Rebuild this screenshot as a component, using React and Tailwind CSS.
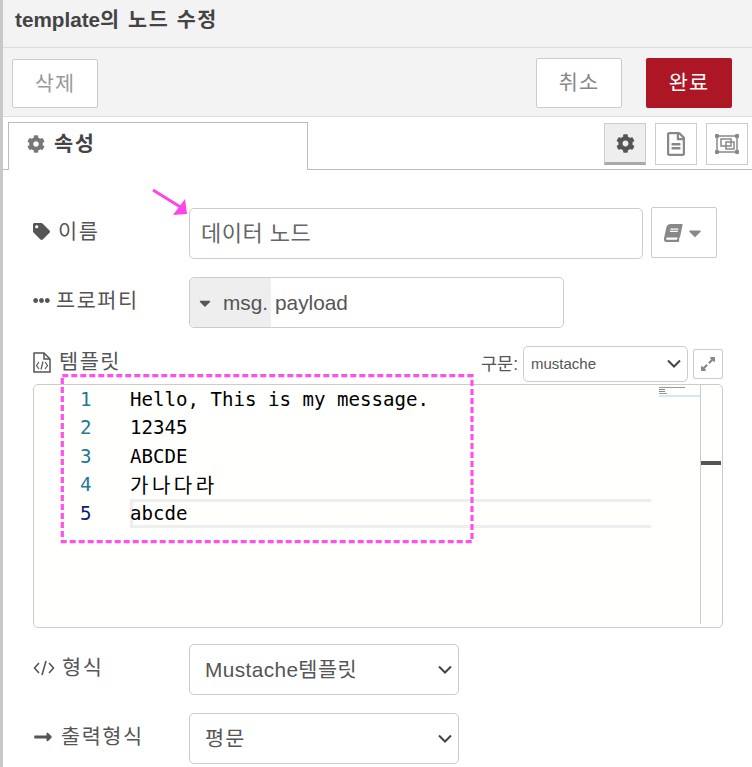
import { FaCog, FaTag, FaEllipsisH, FaBook, FaCaretDown, FaExpandAlt, FaLongArrowAltRight, FaRegFileAlt } from "react-icons/fa";

const sans = "font-['Liberation_Sans','Noto_Sans_CJK_KR',sans-serif]";

function NodeBoxIcon() {
    return (
        <svg width="24" height="20" viewBox="0 0 24 20" fill="none" stroke="#888" strokeWidth="1.5">
            <rect x="2" y="2" width="20" height="16" />
            <rect x="6" y="5" width="10" height="7" />
            <rect x="11" y="8" width="8" height="7" />
            <g fill="#888" stroke="none">
                <rect x="0" y="0" width="4" height="4" rx="1" />
                <rect x="20" y="0" width="4" height="4" rx="1" />
                <rect x="0" y="16" width="4" height="4" rx="1" />
                <rect x="20" y="16" width="4" height="4" rx="1" />
            </g>
        </svg>
    );
}

function TemplateIcon() {
    return (
        <svg width="18" height="21" viewBox="0 0 18 21" fill="none" stroke="#555" strokeWidth="1.5">
            <path d="M1 1 H11 L17 7 V20 H1 Z" />
            <path d="M11 1 V7 H17" />
            <path d="M6 10 L3.5 13.5 L6 17 M12 10 L14.5 13.5 L12 17 M10 9.5 L8 17.5" strokeWidth="1.2" />
        </svg>
    );
}

function CodeIcon() {
    return (
        <svg width="22" height="16" viewBox="0 0 22 16" fill="none" stroke="#555" strokeWidth="1.6">
            <path d="M6 3 L1.5 8 L6 13 M16 3 L20.5 8 L16 13 M13 1 L9 15" />
        </svg>
    );
}

function Chevron({ className }) {
    return (
        <svg className={className} width="14" height="9" viewBox="0 0 14 9" fill="none" stroke="#444" strokeWidth="2">
            <path d="M1 1 L7 7 L13 1" />
        </svg>
    );
}

function Label({ icon, text, gap }) {
    return (
        <div className={`w-[156px] shrink-0 flex items-center ${gap} text-[20.8px] text-[#555] leading-none -mt-[3px]`}>
            <span className="flex justify-center text-[#555] shrink-0">{icon}</span>
            <span className="tracking-[1.5px]">{text}</span>
        </div>
    );
}

function Select({ width, height, text, pad, children }) {
    return (
        <div className={`relative ${width} ${height}`}>
            <select className={`appearance-none w-full h-full border border-[#ccc] rounded-[5px] ${pad} ${text} text-[#555] bg-white`}>
                {children}
            </select>
            <Chevron className="absolute right-[7px] top-1/2 -translate-y-1/2 pointer-events-none" />
        </div>
    );
}

function CodeLine({ n, children, active }) {
    return (
        <div className="flex h-[28.5px] items-center">
            <span className={`w-[96px] pl-[46px] shrink-0 ${active ? "text-[#0b216f]" : "text-[#237893]"}`}>{n}</span>
            <span className="text-black whitespace-pre">{children}</span>
        </div>
    );
}

export default function App() {
    return (
        <div className={`${sans} w-[752px] h-[767px] overflow-hidden relative bg-white border-l-[3px] border-[#c8c8c8]`}>
            <div className="h-[48px] bg-[#f3f3f3] border-b border-[#ddd] pl-[12px] pt-[8px] text-[20.7px] leading-[24px] font-bold text-[#444]">
                template<span className="tracking-[1.6px]">의 노드 수정</span>
            </div>
            <div className="h-[69px] bg-[#f3f3f3] border-b border-[#ddd] pl-[9px] pr-[20px] pt-[11px] flex">
                <button className="w-[86px] h-[49px] bg-white border border-[#ccc] rounded-[2px] text-[20.8px] tracking-[1px] text-[#999]">삭제</button>
                <div className="flex-1" />
                <button className="w-[86px] h-[50px] -mt-[1px] bg-white border border-[#ccc] rounded-[2px] text-[20.8px] tracking-[1px] text-[#888]">취소</button>
                <button className="w-[86px] h-[50px] -mt-[1px] ml-[24px] bg-[#ad1625] rounded-[2px] text-[20.8px] tracking-[1px] text-white">완료</button>
            </div>
            <div className="h-[53px] border-b border-[#bbb] pl-[5px] pr-[4px] flex justify-between">
                <div className="w-[300px] h-[48px] mt-[5px] bg-white border border-[#bbb] border-b-0 -mb-[1px] flex items-center pl-[18px] pb-[5px] gap-[9px] text-[20.8px] tracking-[1.5px] font-bold text-[#444] relative z-10">
                    <FaCog className="text-[#777]" size={18} />
                    <span>속성</span>
                </div>
                <div className="flex mt-[6px] gap-[9px]">
                    <div className="w-[42px] h-[42px] bg-[#eee] border border-[#ccc] border-b-[3px] border-b-[#aaa] flex items-center justify-center">
                        <FaCog className="text-[#555]" size={19} />
                    </div>
                    <div className="w-[42px] h-[42px] border border-[#ccc] flex items-center justify-center">
                        <FaRegFileAlt className="text-[#888]" size={24} />
                    </div>
                    <div className="w-[42px] h-[42px] border border-[#ccc] flex items-center justify-center">
                        <NodeBoxIcon />
                    </div>
                </div>
            </div>

            <div className="pl-[30px] pt-[38px]">
                <div className="flex items-center">
                    <Label icon={<FaTag size={17} />} text="이름" gap="gap-[8px]" />
                    <div className="w-[454px] h-[51px] border border-[#ccc] rounded-[5px] px-[11px] flex items-center text-[22px] text-[#666] tracking-[0.5px]">데이터 노드</div>
                    <div className="w-[66px] h-[51px] -mt-[2px] ml-[8px] border border-[#ccc] rounded-[2px] flex items-center justify-center gap-[3px] text-[#888]">
                        <FaBook size={18} className="-skew-x-12" />
                        <FaCaretDown size={20} />
                    </div>
                </div>
                <div className="flex items-center mt-[18px]">
                    <Label icon={<FaEllipsisH size={17} />} text="프로퍼티" gap="gap-[6px]" />
                    <div className="w-[375px] h-[51px] border border-[#ccc] rounded-[5px] flex items-center overflow-hidden text-[20.8px] text-[#555]">
                        <div className="h-full w-[81px] bg-[#eee] flex items-center pl-[6px] gap-[9px]">
                            <FaCaretDown size={18} />
                            <span>msg.</span>
                        </div>
                        <span className="ml-[4px]">payload</span>
                    </div>
                </div>
                <div className="flex items-center mt-[18px] h-[36px] pr-[29px]">
                    <Label icon={<TemplateIcon />} text="템플릿" gap="gap-[8px]" />
                    <div className="flex-1" />
                    <span className="text-[17.5px] text-[#555] mr-[5px]">구문:</span>
                    <Select width="w-[165px]" height="h-[36px]" text="text-[15px]" pad="pl-[7px]">
                        <option>mustache</option>
                    </Select>
                    <div className="w-[30px] h-[30px] ml-[5px] border border-[#ccc] rounded-[2px] flex items-center justify-center text-[#888]">
                        <FaExpandAlt size={16} />
                    </div>
                </div>
                <div className="mt-[2px] w-[690px] h-[244px] border border-[#ccc] rounded-[5px] flex relative overflow-hidden bg-[#fffffd]">
                    <div className="flex-1 font-['DejaVu_Sans_Mono','Noto_Sans_CJK_KR',monospace] text-[19.1px] relative">
                        <div className="absolute left-[96px] top-[114px] w-[521px] h-[29px] border-[3px] border-r-0 border-[#eee]" />
                        <div className="relative pt-[1px]">
                            <CodeLine n="1">Hello, This is my message.</CodeLine>
                            <CodeLine n="2">12345</CodeLine>
                            <CodeLine n="3">ABCDE</CodeLine>
                            <CodeLine n="4"><span className="font-['Noto_Sans_CJK_KR',monospace] text-[20px] tracking-[3.5px]">가나다라</span></CodeLine>
                            <CodeLine n="5" active>abcde</CodeLine>
                        </div>
                    </div>
                    <div className="w-[41px] pt-[2px] flex flex-col gap-[1px]">
                        <div className="h-[1px] w-[26px] bg-[#999]" />
                        <div className="h-[1px] w-[6px] bg-[#888]" />
                        <div className="h-[1px] w-[6px] bg-[#888]" />
                        <div className="h-[1px] w-[8px] bg-[#999]" />
                        <div className="h-[2px] w-[41px] bg-[#d5e7f7]" />
                    </div>
                    <div className="w-[22px] border-l border-[#ccc] pt-[76px] mb-[3px]">
                        <div className="h-[4px] w-[20px] bg-[#555]" />
                    </div>
                </div>
                <div className="flex items-center mt-[16px]">
                    <Label icon={<CodeIcon />} text="형식" gap="gap-[7px]" />
                    <Select width="w-[270px]" height="h-[51px]" text="text-[20.8px] tracking-[0.4px]" pad="pl-[15px]">
                        <option>Mustache템플릿</option>
                    </Select>
                </div>
                <div className="flex items-center mt-[18px]">
                    <Label icon={<FaLongArrowAltRight size={20} />} text="출력형식" gap="gap-[8px]" />
                    <Select width="w-[270px]" height="h-[51px]" text="text-[20.8px] tracking-[1px]" pad="pl-[15px]">
                        <option>평문</option>
                    </Select>
                </div>
            </div>

            {/* annotations drawn on top of the shot */}
            <svg className="absolute left-[147px] top-[185px]" width="45" height="35" viewBox="0 0 45 35">
                <line x1="3" y1="5" x2="32" y2="23" stroke="#ff44ea" strokeWidth="3" />
                <polygon points="35,14 37,29 23,30" fill="#ff44ea" />
            </svg>
            <svg className="absolute left-[54px] top-[374px]" width="420" height="172" viewBox="0 0 420 172" fill="none">
                <rect x="5.3" y="1.7" width="409.7" height="166" stroke="#ff50ec" strokeWidth="3.2" strokeDasharray="6 3" />
            </svg>
        </div>
    );
}
